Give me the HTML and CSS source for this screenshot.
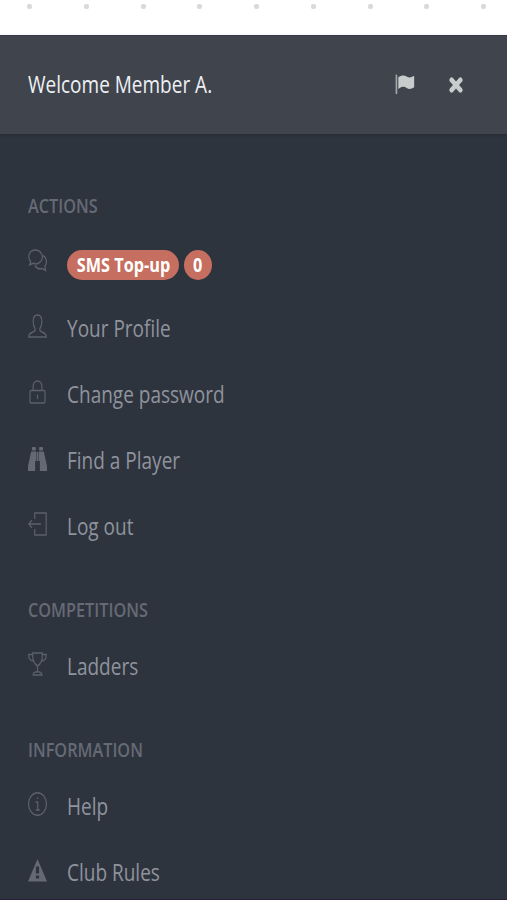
FILE: index.html
```
<!DOCTYPE html>
<html lang="en">
<head>
    <meta charset="UTF-8">
    <meta name="viewport" content="width=device-width, initial-scale=1.0">
    <title>Member Menu</title>
    <link rel="stylesheet" href="styles.css">
</head>
<body>
    <div class="dots">
        <i></i><i></i><i></i><i></i><i></i><i></i><i></i><i></i><i></i>
    </div>
    <div class="menu">
        <div class="menu-header">
            <div class="welcome"><span class="narrow">Welcome Member A.</span></div>
            <svg class="flag" viewBox="0 0 24 20" preserveAspectRatio="none"><path d="M1.7 1.5V19.5" stroke="#a3a7aa" stroke-width="2" stroke-linecap="round"/><path d="M4 3.2C8 .8 11 1 14 2.5C17 4 19 3.5 23 1.8V13.2C19 15.3 16.500 15.300 14 13.900C11 12.300 8 12.500 4 14.900Z" fill="#c9cccd"/></svg>
            <svg class="close" viewBox="0 0 16 16" preserveAspectRatio="none"><path d="M3 3L13 13M13 3L3 13" stroke="#c9cccd" stroke-width="5" stroke-linecap="round"/></svg>
        </div>
        <div class="menu-content">
            <h3><span class="narrow">ACTIONS</span></h3>
            <ul>
                <li>
                    <svg class="icon" viewBox="0 0 24 24" preserveAspectRatio="none"><path d="M3.500 13.800C-1.500 9 1.500 2 9 2S20.500 8.500 16.500 13C13.500 16 9.500 16.200 7 15.300L2 16.800Z"/><path d="M19.300 7.500C24 10 24.500 15 21.300 18.300L22.300 22.500L18 20.500C14 21.500 10.500 20 8.800 17.500"/></svg>
                    <div class="badge"><span class="narrow">SMS Top-up</span></div>
                    <div class="badge count"><span class="narrow">0</span></div>
                </li>
                <li>
                    <svg class="icon" viewBox="0 0 24 24" preserveAspectRatio="none"><path d="M9 14.500C7.500 13 6.500 10.500 6.500 7.500C6.500 3 8.500 1 12 1S17.500 3 17.500 7.500C17.500 10.500 16.500 13 15 14.500V16.500C16 18 23 18.500 23 22V23H1V22C1 18.500 8 18 9 16.500Z"/></svg>
                    <span class="narrow">Your Profile</span>
                </li>
                <li>
                    <svg class="icon" viewBox="0 0 24 24" preserveAspectRatio="none"><rect x="2.500" y="10.500" width="19" height="12.500" rx="1.500"/><path d="M6.500 10.500V6.500C6.500 -.8 17.500 -.8 17.500 6.500V10.500M12 14.500V19"/></svg>
                    <span class="narrow">Change password</span>
                </li>
                <li>
                    <svg class="icon solid low" viewBox="0 0 24 24" preserveAspectRatio="none"><rect x="5" y="0" width="5" height="3.500" rx="1"/><rect x="14" y="0" width="5" height="3.500" rx="1"/><path d="M4 4.500H10.300V14H9V24H0V19ZM20 4.500H13.700V14H15V24H24V19ZM11 5H13V14H11Z"/></svg>
                    <span class="narrow">Find a Player</span>
                </li>
                <li>
                    <svg class="icon" viewBox="0 0 24 24" preserveAspectRatio="none"><path d="M8.500 7V1H23V23H8.500V17M16.500 12H1M5 8L1 12L5 16"/></svg>
                    <span class="narrow">Log out</span>
                </li>
            </ul>
            <h3><span class="narrow">COMPETITIONS</span></h3>
            <ul>
                <li>
                    <svg class="icon" viewBox="0 0 24 24" preserveAspectRatio="none"><path d="M6 1H18V5C18 9 15.500 12 12 14C8.500 12 6 9 6 5ZM6 2.500H1C.5 6.500 3 8.800 7.500 9M18 2.500H23C23.500 6.500 21 8.800 16.500 9M12 14V19.500M6.500 23C6.500 20.500 9 19.800 12 19.800S17.500 20.500 17.500 23Z"/></svg>
                    <span class="narrow">Ladders</span>
                </li>
            </ul>
            <h3><span class="narrow">INFORMATION</span></h3>
            <ul>
                <li>
                    <svg class="icon" viewBox="0 0 24 24" preserveAspectRatio="none"><circle cx="12" cy="12" r="11.300"/><path d="M9.500 10H12.300V18M9.500 18H15M11.300 6.300H12.900"/></svg>
                    <span class="narrow">Help</span>
                </li>
                <li>
                    <svg class="icon solid" viewBox="0 0 24 24" preserveAspectRatio="none"><path fill-rule="evenodd" d="M12 1L24 23.500H0ZM10 8.500V15.500H14V8.500ZM10 17.500V20.500H14V17.500Z"/></svg>
                    <span class="narrow">Club Rules</span>
                </li>
            </ul>
        </div>
    </div>
</body>
</html>
```
FILE: styles.css
```
body {
    margin: 0;
    background-color: #fff;
    font-family: "Open Sans", sans-serif;
}
/* Condensed lettering */
.narrow {
    display: inline-block;
    white-space: nowrap;
    transform: scaleX(0.8125);
    transform-origin: 0 50%;
}
.dots {
    display: flex;
    justify-content: space-between;
    box-sizing: border-box;
    height: 35px;
    padding: 4px 21px 0 27px;
}
.dots i {
    width: 5px;
    height: 5px;
    border-radius: 2px;
    background-color: #d9d9d9;
}
.menu {
    box-sizing: border-box;
    height: 865px;
    background-color: #2e343e;
    border-bottom: 1px solid #29213a;
}
.menu-header {
    display: flex;
    align-items: center;
    box-sizing: border-box;
    height: 99px;
    padding: 0 44px 3px 28px;
    background-color: #40444d;
    border-top: 1px solid #353a43;
    box-shadow: 0 1px 3px rgba(0, 0, 0, 0.2);
}
.welcome {
    flex: 1;
    font-size: 23.4px;
    color: #eef0f4;
}
.flag {
    width: 20px;
    height: 20px;
    margin-right: 34px;
}
.close {
    width: 14px;
    height: 16px;
    margin-top: 3px;
}
svg {
    display: block;
    fill: none;
}
.menu-content {
    padding: 21px 28px 0;
}
.menu-content h3 {
    margin: 0;
    padding: 36px 0 8px;
    font-size: 20px;
    line-height: 30px;
    font-weight: 600;
    color: #666a75;
}
.menu-content ul {
    list-style: none;
    margin: 0;
    padding: 0;
}
.menu-content li {
    display: flex;
    align-items: center;
    height: 66px;
    font-size: 23.4px;
    line-height: 32px;
    color: #8f939d;
}
.icon {
    width: 19px;
    height: 24px;
    margin: 0 20px 4px 0;
    stroke: #5b606b;
    stroke-width: 1.5;
}
.solid {
    fill: #656974;
    stroke: none;
}
.low {
    margin-bottom: 2px;
}
.badge {
    display: flex;
    justify-content: center;
    width: 112px;
    height: 30px;
    margin: 6px 5px 0 0;
    border-radius: 15px;
    background-color: #c66f60;
    color: #fff;
    font-size: 20px;
    line-height: 29px;
    font-weight: 700;
}
.badge .narrow {
    transform-origin: 50% 50%;
}
.count {
    width: 28px;
    border-radius: 14px / 15px;
}
```
